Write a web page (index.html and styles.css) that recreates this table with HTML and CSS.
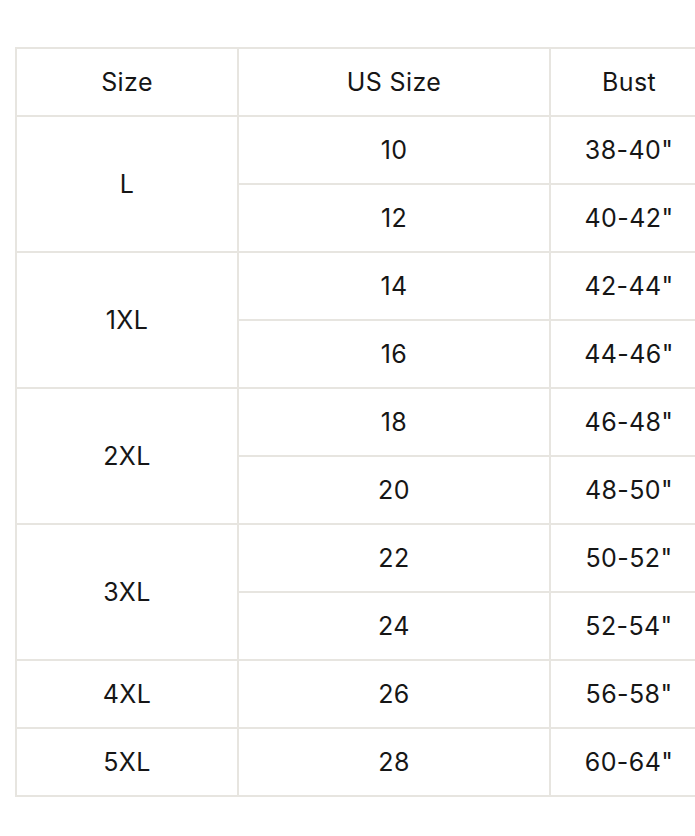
FILE: index.html
```html
<!DOCTYPE html>
<html>
<head>
<meta charset="utf-8">
<link rel="stylesheet" href="styles.css">
</head>
<body>
<div class="wrap">
<table class="size-table">
  <thead>
    <tr><th class="c1">Size</th><th class="c2">US Size</th><th class="c3">Bust</th></tr>
  </thead>
  <tbody>
    <tr><td rowspan="2">L</td><td>10</td><td>38-40"</td></tr>
    <tr><td>12</td><td>40-42"</td></tr>
    <tr><td rowspan="2">1XL</td><td>14</td><td>42-44"</td></tr>
    <tr><td>16</td><td>44-46"</td></tr>
    <tr><td rowspan="2">2XL</td><td>18</td><td>46-48"</td></tr>
    <tr><td>20</td><td>48-50"</td></tr>
    <tr><td rowspan="2">3XL</td><td>22</td><td>50-52"</td></tr>
    <tr><td>24</td><td>52-54"</td></tr>
    <tr><td>4XL</td><td>26</td><td>56-58"</td></tr>
    <tr><td>5XL</td><td>28</td><td>60-64"</td></tr>
  </tbody>
</table>
</div>
</body>
</html>
```
FILE: styles.css
```css
html, body {
  margin: 0;
  padding: 0;
  background: #fff;
  overflow: hidden;
}
.wrap {
  padding: 47px 0 0 15px;
  width: 760px;
}
.size-table {
  border-collapse: collapse;
  table-layout: fixed;
  font-family: "Inter", "Open Sans", sans-serif;
  font-size: 25px;
  letter-spacing: 0.4px;
  font-weight: 400;
  color: #161616;
}
.size-table th, .size-table td {
  border: 2px solid #e7e5e0;
  text-align: center;
  vertical-align: middle;
  height: 66px;
  padding: 0;
  font-weight: 400;
}
.c1 { width: 220px; }
.c2 { width: 310px; }
.c3 { width: 156px; }
```
